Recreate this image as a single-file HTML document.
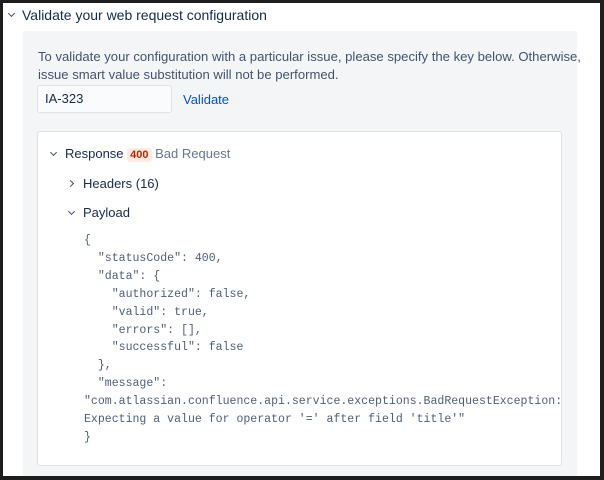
<!DOCTYPE html>
<html><head><style>
*{margin:0;padding:0;box-sizing:border-box}
html,body{width:604px;height:480px;overflow:hidden;background:#1e1e1e}
body{font-family:"Liberation Sans",sans-serif;color:#172b4d;font-size:13px}
.page{position:absolute;left:3px;top:3px;width:597px;height:473px;background:#fff;overflow:hidden}
.abs{position:absolute;white-space:nowrap}
.gray{position:absolute;left:20px;top:28px;width:554px;height:460px;background:#f4f5f7}
.card{position:absolute;left:34px;top:128px;width:525px;height:335px;background:#fff;border:1px solid #dfe1e6;border-radius:3px}
.chev{position:absolute;width:5px;height:5px;border-right:1.5px solid #42526e;border-bottom:1.5px solid #42526e}
pre{font-family:"Liberation Mono",monospace;font-size:11.55px;line-height:17.9px;color:#505f79;white-space:pre !important}
</style></head><body>
<div class="page">
<div class="chev" style="left:6px;top:8px;transform:rotate(45deg)"></div>
<div class="abs" style="left:19px;top:4px;font-size:14px">Validate your web request configuration</div>
<div class="gray"></div>
<div class="abs" style="left:35px;top:45px;color:#42526e;line-height:18px;font-size:13.1px">To validate your configuration with a particular issue, please specify the key below. Otherwise,<br>issue smart value substitution will not be performed.</div>
<div class="abs" style="left:34px;top:82px;width:135px;height:28px;background:#fafbfc;border:1px solid #dfe1e6;border-radius:3px;padding:6px 7px;line-height:14px">IA-323</div>
<div class="abs" style="left:180px;top:89px;color:#0052cc">Validate</div>
<div class="card"></div>
<div class="chev" style="left:48px;top:147px;transform:rotate(45deg)"></div>
<div class="abs" style="left:62px;top:143px">Response <span style="background:#ffebe6;color:#bf2600;font-size:11px;font-weight:bold;padding:1px 3px;border-radius:3px">400</span> <span style="color:#6b778c">Bad Request</span></div>
<div class="chev" style="left:65px;top:178px;transform:rotate(-45deg)"></div>
<div class="abs" style="left:80px;top:173px">Headers (16)</div>
<div class="chev" style="left:66px;top:206px;transform:rotate(45deg)"></div>
<div class="abs" style="left:80px;top:202px">Payload</div>
<pre class="abs" style="left:81px;top:229px">{
  "statusCode": 400,
  "data": {
    "authorized": false,
    "valid": true,
    "errors": [],
    "successful": false
  },
  "message":
"com.atlassian.confluence.api.service.exceptions.BadRequestException:
Expecting a value for operator '=' after field 'title'"
}</pre>
</div>
</body></html>
